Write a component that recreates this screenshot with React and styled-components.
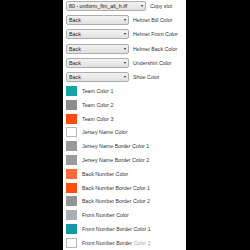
import React from 'react'
import styled, { createGlobalStyle } from 'styled-components'

const GlobalStyle = createGlobalStyle`
    html, body {
        margin: 0;
        padding: 0;
        background: #000000;
    }
    body {
        font-family: "Liberation Sans", Arial, sans-serif;
    }
`

const Panel = styled.div`
    margin-left: 63px;
    width: 123px;
    height: 250px;
    background: #ffffff;
    box-sizing: border-box;
    padding: 1px 0 0 3px;
    display: flex;
    flex-direction: column;
`

const SlotList = styled.div`
    display: flex;
    flex-direction: column;
    gap: 4.2px;
`

const SlotRow = styled.div`
    display: flex;
    align-items: center;
    height: 10px;
    gap: 4px;
`

const Select = styled.div`
    box-sizing: border-box;
    width: ${(p) => p.width}px;
    height: 10px;
    border: 1px solid #acacac;
    border-radius: 2px;
    background: linear-gradient(#f2f2f2, #e0e0e0);
    display: flex;
    align-items: center;
    justify-content: space-between;
    padding: 0 2px;
    font-size: 5.3px;
    color: #1a1a1a;
    white-space: nowrap;
    overflow: hidden;
`

const Arrow = styled.span`
    width: 0;
    height: 0;
    border-left: 1.5px solid transparent;
    border-right: 1.5px solid transparent;
    border-top: 2px solid #222;
    margin-left: 2px;
    flex-shrink: 0;
`

const Label = styled.span`
    font-size: 5.3px;
    color: #333333;
    white-space: nowrap;
`

const Faded = styled.span`
    color: #a8a8a8;
`

const ColorList = styled.div`
    margin-top: 4px;
    display: flex;
    flex-direction: column;
    gap: 3.8px;
`

const ColorRow = styled.div`
    display: flex;
    align-items: center;
    height: 10px;
    gap: 5px;
`

const Swatch = styled.div`
    box-sizing: border-box;
    width: 11px;
    height: 10px;
    background: ${(p) => p.color};
    border: 1px solid ${(p) => (p.color === '#ffffff' ? '#b8b8b8' : p.color)};
`

const slots = [
    { value: '80 - uniform_flm_alt_h.iff', label: 'Copy slot', width: 80 },
    { value: 'Back', label: 'Helmet Bill Color', width: 63 },
    { value: 'Back', label: 'Helmet Front Color', width: 63 },
    { value: 'Back', label: 'Helmet Back Color', width: 63 },
    { value: 'Back', label: 'Undershirt Color', width: 63 },
    { value: 'Back', label: 'Shoe Color', width: 63 },
]

const colors = [
    { color: '#15a3a5', label: 'Team Color 1' },
    { color: '#8c8c8c', label: 'Team Color 2' },
    { color: '#ff4a12', label: 'Team Color 3' },
    { color: '#ffffff', label: 'Jersey Name Color' },
    { color: '#999999', label: 'Jersey Name Border Color 1' },
    { color: '#9a9a9a', label: 'Jersey Name Border Color 2' },
    { color: '#ff6a3c', label: 'Back Number Color' },
    { color: '#ff4d12', label: 'Back Number Border Color 1' },
    { color: '#949494', label: 'Back Number Border Color 2' },
    { color: '#a9b0b5', label: 'Front Number Color' },
    { color: '#1496a3', label: 'Front Number Border Color 1' },
    { color: '#ffffff', label: 'Front Number Border', faded: 'Color 2' },
]

export default function App() {
    return (
        <>
            <GlobalStyle />
            <Panel>
                <SlotList>
                    {slots.map((s) => (
                        <SlotRow key={s.label}>
                            <Select width={s.width}>
                                {s.value}
                                <Arrow />
                            </Select>
                            <Label>{s.label}</Label>
                        </SlotRow>
                    ))}
                </SlotList>
                <ColorList>
                    {colors.map((c) => (
                        <ColorRow key={c.label}>
                            <Swatch color={c.color} />
                            <Label>
                                {c.label}
                                {c.faded && <Faded> {c.faded}</Faded>}
                            </Label>
                        </ColorRow>
                    ))}
                </ColorList>
            </Panel>
        </>
    )
}
